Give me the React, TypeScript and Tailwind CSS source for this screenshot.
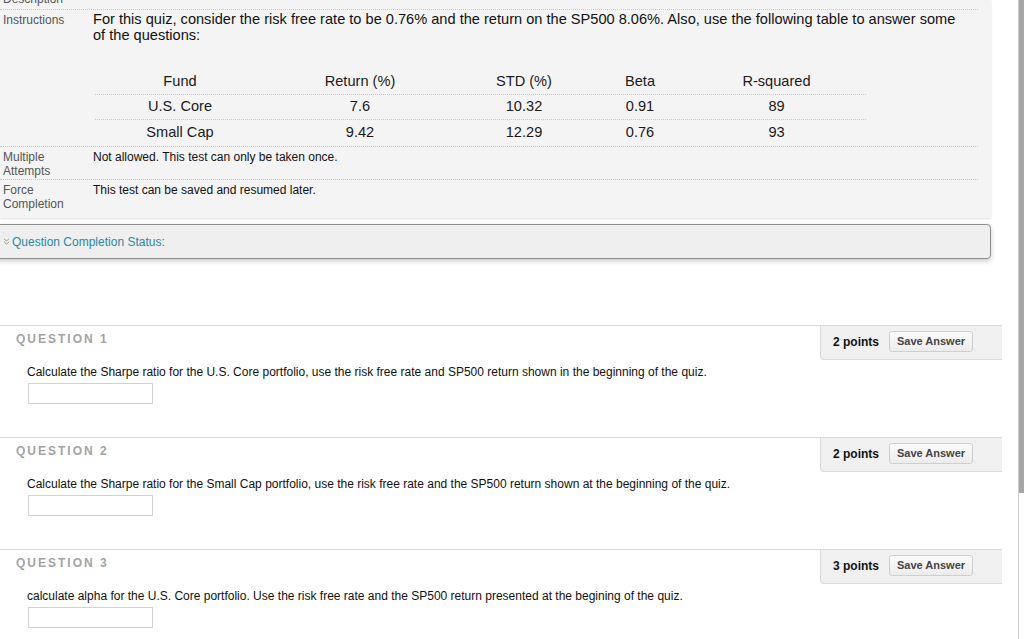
import React from 'react';

const font = "font-['Liberation_Sans','Helvetica',Arial,sans-serif]";

const rows = [
  { fund: 'U.S. Core', ret: '7.6', std: '10.32', beta: '0.91', r2: '89' },
  { fund: 'Small Cap', ret: '9.42', std: '12.29', beta: '0.76', r2: '93' },
];

function FundTable() {
  const cols = ['w-[170px]', 'w-[190px]', 'w-[138px]', 'w-[94px]', 'w-[179px]'];
  return (
    <div className="ml-[2px] mt-[27px] w-[771px] text-[14.6px] text-[#1a1a1a]">
      <div className="flex h-[25px] items-center border-b border-dotted border-[#c9c9c9]">
        {['Fund', 'Return (%)', 'STD (%)', 'Beta', 'R-squared'].map((h, i) => (
          <div key={h} className={`${cols[i]} text-center`}>
            {h}
          </div>
        ))}
      </div>
      {rows.map((r, idx) => (
        <div
          key={r.fund}
          className={`flex h-[25px] items-center ${
            idx === 0 ? 'border-b border-dotted border-[#c9c9c9]' : ''
          }`}
        >
          {[r.fund, r.ret, r.std, r.beta, r.r2].map((v, i) => (
            <div key={i} className={`${cols[i]} text-center`}>
              {v}
            </div>
          ))}
        </div>
      ))}
    </div>
  );
}

function InfoPanel() {
  return (
    <div className="w-[991px] shrink-0 bg-[#f4f4f4] pr-[13px] pb-[7px] shadow-[0_1px_2px_rgba(0,0,0,0.12)]">
      {/* Description (scrolled mostly out of view) */}
      <div className="-mt-[11px] flex h-[21px] border-b border-dotted border-[#c9c9c9]">
        <div className="w-[93px] pl-[3px] pt-[3px] text-[12px] leading-[14px] text-[#555]">
          Description
        </div>
      </div>

      {/* Instructions */}
      <div className="flex border-b border-dotted border-[#c9c9c9] pb-[1px]">
        <div className="w-[93px] shrink-0 pl-[3px] pt-[3px] text-[12px] leading-[14px] text-[#555]">
          Instructions
        </div>
        <div className="flex-1 pt-[1px]">
          <p className="w-[872px] text-[14.6px] leading-[16px] text-[#111]">
            For this quiz, consider the risk free rate to be 0.76% and the return on the SP500
            8.06%. Also, use the following table to answer some of the questions:
          </p>
          <FundTable />
        </div>
      </div>

      {/* Multiple Attempts */}
      <div className="flex border-b border-dotted border-[#c9c9c9] pt-[3px] pb-[1px]">
        <div className="w-[93px] shrink-0 pl-[3px] text-[12px] leading-[14px] text-[#555]">
          Multiple
          <br />
          Attempts
        </div>
        <div className="text-[12px] leading-[14px] text-[#111]">
          Not allowed. This test can only be taken once.
        </div>
      </div>

      {/* Force Completion */}
      <div className="flex pt-[3px]">
        <div className="w-[93px] shrink-0 pl-[3px] text-[12px] leading-[14px] text-[#555]">
          Force
          <br />
          Completion
        </div>
        <div className="text-[12px] leading-[14px] text-[#111]">
          This test can be saved and resumed later.
        </div>
      </div>
    </div>
  );
}

function StatusBar() {
  return (
    <div className="-ml-[5px] mt-[6px] flex h-[35px] w-[996px] shrink-0 items-center rounded-[4px] border border-[#8e8e8e] bg-[#efefef] pl-[7px] shadow-[0_2px_5px_rgba(0,0,0,0.22)]">
      <svg width="7" height="7" viewBox="0 0 7 7" className="mr-[2px]">
        <polyline points="1,0.8 3.5,3 6,0.8" fill="none" stroke="#9a9a9a" strokeWidth="1" />
        <polyline points="1,3.8 3.5,6 6,3.8" fill="none" stroke="#9a9a9a" strokeWidth="1" />
      </svg>
      <span className="text-[12px] text-[#2a87a4]">Question Completion Status:</span>
    </div>
  );
}

interface QuestionProps {
  num: number;
  points: number;
  text: string;
}

function Question({ num, points, text }: QuestionProps) {
  return (
    <div className="flex h-[112px] w-[1002px] shrink-0 flex-col border-t border-[#d9d9d9]">
      <div className="flex h-[34px] shrink-0 justify-between">
        <div className="pl-[16px] pt-[6px] text-[12px] font-bold leading-[14px] tracking-[2px] text-[#a3a3a3]">
          QUESTION {num}
        </div>
        <div className="flex w-[182px] items-center rounded-bl-[4px] border-b border-l border-[#dcdcdc] bg-[#f0f0f0] pb-[2px] pl-[12px]">
          <span className="text-[12px] font-bold text-[#111]">{points} points</span>
          <button className="ml-[10px] h-[21px] w-[84px] rounded-[3px] border border-[#cfcfcf] bg-gradient-to-b from-[#fbfbfb] to-[#ececec] text-[11px] font-bold text-[#444]">
            Save Answer
          </button>
        </div>
      </div>
      <p className="mt-[6px] pl-[27px] text-[12px] leading-[13px] text-[#111]">{text}</p>
      <div className="ml-[28px] mt-[4px] h-[21px] w-[125px] shrink-0 border border-[#d2d2d2] bg-white" />
    </div>
  );
}

export default function App() {
  return (
    <div className={`flex h-[639px] w-[1024px] overflow-hidden bg-white ${font}`}>
      <div className="flex w-[1018px] flex-col">
        <InfoPanel />
        <StatusBar />
        <div className="mt-[66px] flex shrink-0 flex-col">
          <Question
            num={1}
            points={2}
            text="Calculate the Sharpe ratio for the U.S. Core portfolio, use the risk free rate and SP500 return shown in the beginning of the quiz."
          />
          <Question
            num={2}
            points={2}
            text="Calculate the Sharpe ratio for the Small Cap portfolio, use the risk free rate and the SP500 return shown at the beginning of the quiz."
          />
          <Question
            num={3}
            points={3}
            text="calculate alpha for the U.S. Core portfolio. Use the risk free rate and the SP500 return presented at the begining of the quiz."
          />
        </div>
      </div>
      {/* scrollbar */}
      <div className="flex w-[6px] flex-col border-l border-[#cfcfcf] bg-white">
        <div className="h-[493px] shrink-0 bg-[#a6a6a6]" />
      </div>
    </div>
  );
}
